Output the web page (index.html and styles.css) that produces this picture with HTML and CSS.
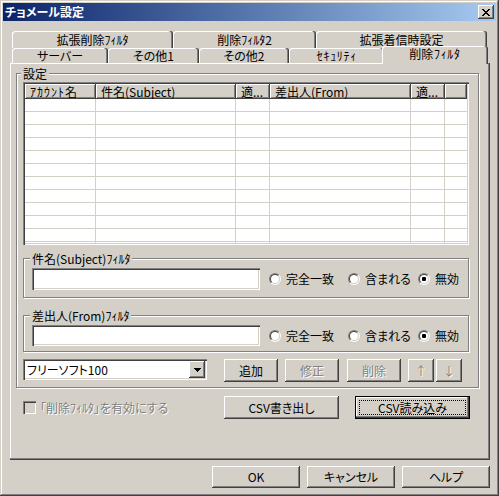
FILE: index.html
```html
<!DOCTYPE html>
<html lang="ja">
<head>
<meta charset="utf-8">
<title>チョメール設定</title>
<link rel="stylesheet" href="styles.css">
</head>
<body>
<div class="window">
  <div class="titlebar">
    <span class="title">チョメール設定</span>
    <span class="close-btn">
      <svg width="8" height="7" viewBox="0 0 8 7" shape-rendering="crispEdges"><path fill="#000" d="M0 0h2v1H0zM6 0h2v1H6zM1 1h2v1H1zM5 1h2v1H5zM2 2h4v1H2zM3 3h2v1H3zM2 4h4v1H2zM1 5h2v1H1zM5 5h2v1H5zM0 6h2v1H0zM6 6h2v1H6z"/></svg>
    </span>
  </div>
  <div class="client">
    <div class="tabstrip">
      <div class="tab-row tab-row-back">
        <div class="tab tab-w161">拡張削除ﾌｨﾙﾀ</div>
        <div class="tab tab-w143">削除ﾌｨﾙﾀ2</div>
        <div class="tab tab-w171">拡張着信時設定</div>
      </div>
      <div class="tab-row tab-row-front">
        <div class="tab tab-w96">サーバー</div>
        <div class="tab tab-w91">その他1</div>
        <div class="tab tab-w90">その他2</div>
        <div class="tab tab-w95"><span class="ls-half">ｾｷｭﾘﾃｨ</span></div>
        <div class="tab tab-selected">削除<span class="ls-half">ﾌｨﾙﾀ</span></div>
      </div>
    </div>
    <div class="panel">
      <div class="group main-group">
        <div class="group-title">設定</div>
        <div class="listview">
          <div class="lv-cols lv-header">
            <div class="lv-head"><span class="ls-1">ｱｶｳﾝﾄ</span>名</div>
            <div class="lv-head">件名(Subject)</div>
            <div class="lv-head">適...</div>
            <div class="lv-head">差出人(From)</div>
            <div class="lv-head">適...</div>
            <div class="lv-head"></div>
          </div>
          <div class="lv-body">
            <div class="lv-cols lv-row"><span></span><span></span><span></span><span></span><span></span><span></span></div>
            <div class="lv-cols lv-row"><span></span><span></span><span></span><span></span><span></span><span></span></div>
            <div class="lv-cols lv-row"><span></span><span></span><span></span><span></span><span></span><span></span></div>
            <div class="lv-cols lv-row"><span></span><span></span><span></span><span></span><span></span><span></span></div>
            <div class="lv-cols lv-row"><span></span><span></span><span></span><span></span><span></span><span></span></div>
            <div class="lv-cols lv-row"><span></span><span></span><span></span><span></span><span></span><span></span></div>
            <div class="lv-cols lv-row"><span></span><span></span><span></span><span></span><span></span><span></span></div>
            <div class="lv-cols lv-row"><span></span><span></span><span></span><span></span><span></span><span></span></div>
            <div class="lv-cols lv-row"><span></span><span></span><span></span><span></span><span></span><span></span></div>
            <div class="lv-cols lv-row"><span></span><span></span><span></span><span></span><span></span><span></span></div>
            <div class="lv-cols lv-row"><span></span><span></span><span></span><span></span><span></span><span></span></div>
            <div class="lv-cols lv-row"><span></span><span></span><span></span><span></span><span></span><span></span></div>
          </div>
        </div>

        <div class="group filter-group filter-group-1">
          <div class="group-title">件名(Subject)ﾌｨﾙﾀ</div>
          <div class="filter-row">
            <div class="textbox"></div>
            <div class="radios">
              <div class="radio radio-w79"><span class="radio-box"><span class="radio-inner"></span></span>完全一致</div>
              <div class="radio radio-w70"><span class="radio-box"><span class="radio-inner"></span></span>含まれる</div>
              <div class="radio"><span class="radio-box"><span class="radio-inner"><span class="radio-dot"></span></span></span>無効</div>
            </div>
          </div>
        </div>

        <div class="group filter-group filter-group-2">
          <div class="group-title">差出人(From)ﾌｨﾙﾀ</div>
          <div class="filter-row">
            <div class="textbox"></div>
            <div class="radios">
              <div class="radio radio-w79"><span class="radio-box"><span class="radio-inner"></span></span>完全一致</div>
              <div class="radio radio-w70"><span class="radio-box"><span class="radio-inner"></span></span>含まれる</div>
              <div class="radio"><span class="radio-box"><span class="radio-inner"><span class="radio-dot"></span></span></span>無効</div>
            </div>
          </div>
        </div>

        <div class="action-row">
          <div class="combo">
            <span class="combo-text">フリーソフト100</span>
            <span class="combo-btn"><svg width="7" height="4" viewBox="0 0 7 4" shape-rendering="crispEdges"><path fill="#000" d="M0 0h7v1H0zM1 1h5v1H1zM2 2h3v1H2zM3 3h1v1H3z"/></svg></span>
          </div>
          <button class="btn btn-small btn-add">追加</button>
          <button class="btn btn-small btn-edit" disabled>修正</button>
          <button class="btn btn-small btn-del" disabled>削除</button>
          <button class="btn btn-arrow btn-up" disabled>↑</button>
          <button class="btn btn-arrow btn-down" disabled>↓</button>
        </div>
      </div>

      <div class="option-row">
        <div class="check-wrap">
          <span class="checkbox"></span>
          <span class="disabled-text">「削除ﾌｨﾙﾀ」を有効にする</span>
        </div>
        <button class="btn btn-csv">CSV書き出し</button>
        <button class="btn btn-csv btn-default"><span class="focus-rect">CSV読み込み</span></button>
      </div>
    </div>

    <div class="dialog-buttons">
      <button class="btn btn-dlg">OK</button>
      <button class="btn btn-dlg">キャンセル</button>
      <button class="btn btn-dlg">ヘルプ</button>
    </div>
  </div>
</div>
</body>
</html>
```

FILE: styles.css
```css
* { box-sizing: border-box; }
html, body { margin: 0; padding: 0; }
body {
  width: 499px;
  height: 496px;
  overflow: hidden;
  background: #D4D0C8;
  font-family: "Noto Sans CJK JP", "Noto Sans", "Liberation Sans", sans-serif;
  font-size: 12px;
  line-height: 12px;
  font-feature-settings: "palt";
  color: #000;
}

/* spacing helpers for half-width kana (UI font is wider than Noto's half-width forms) */
.ls-half { letter-spacing: 0.7px; padding-left: 0.7px; }
.ls-1 { letter-spacing: 1px; }

/* window frame */
.window {
  width: 499px;
  height: 496px;
  padding: 3px;
  background: #D4D0C8;
  box-shadow: inset -1px -1px #404040, inset 1px 1px #D4D0C8, inset -2px -2px #808080, inset 2px 2px #fff;
  display: flex;
  flex-direction: column;
}
.titlebar {
  flex: none;
  height: 18px;
  display: flex;
  align-items: center;
  justify-content: space-between;
  padding: 0 2px;
  background: linear-gradient(to right, #0A246A, #A6CAF0);
}
.title {
  color: #fff;
  font-weight: bold;
  white-space: nowrap;
}
.close-btn {
  width: 16px;
  height: 14px;
  display: flex;
  align-items: center;
  justify-content: center;
  background: #D4D0C8;
  box-shadow: inset -1px -1px #404040, inset 1px 1px #fff, inset -2px -2px #808080;
}
.close-btn svg { display: block; margin-top: 1px; }

.client {
  flex: 1;
  display: flex;
  flex-direction: column;
  padding: 10px 6px 0 7px;
}

/* tabs */
.tabstrip { padding-left: 2px; }
.tab-row { display: flex; }
.tab-row-back { height: 17px; }
.tab-row-front { height: 15px; align-items: flex-end; }
.tab {
  flex: none;
  height: 100%;
  display: flex;
  align-items: center;
  justify-content: center;
  white-space: nowrap;
  background: #D4D0C8;
  border-radius: 3px 3px 0 0;
  box-shadow: inset -1px 0 #404040, inset -2px 0 #808080, inset 1px 1px #fff;
}
.tab-w161 { width: 161px; }
.tab-w143 { width: 143px; }
.tab-w171 { width: 171px; }
.tab-w96 { width: 96px; }
.tab-w91 { width: 91px; }
.tab-w90 { width: 90px; }
.tab-w95 { width: 95px; }
.tab-selected {
  width: 106px;
  height: 18px;
  margin: 0 0 -1px -2px;
  padding-bottom: 2px;
  position: relative;
  z-index: 1;
}

/* tab page */
.panel {
  flex: none;
  width: 480px;
  height: 397px;
  padding: 10px 0 0 6px;
  box-shadow: inset -1px -1px #404040, inset -2px -2px #808080, inset 1px 1px #fff;
}

.group {
  border: 1px solid #808080;
  box-shadow: inset 1px 1px #fff, 1px 1px #fff;
}
.group-title {
  width: fit-content;
  height: 12px;
  margin: -6px 0 0 -2px;
  padding: 0 2px;
  background: #D4D0C8;
  white-space: nowrap;
}
.main-group {
  width: 463px;
  padding: 0 9px 5px 6px;
}
.main-group > .group-title { margin-bottom: 2px; }

/* list view */
.listview {
  height: 163px;
  padding: 2px;
  background: #fff;
  box-shadow: inset 1px 1px #808080, inset 2px 2px #404040, inset -1px -1px #fff, inset -2px -2px #D4D0C8;
}
.lv-cols {
  display: grid;
  grid-template-columns: 71px 140px 34px 141px 34px 1fr;
}
.lv-header { height: 15px; }
.lv-head {
  display: flex;
  align-items: center;
  padding-left: 5px;
  overflow: hidden;
  white-space: nowrap;
  background: #D4D0C8;
  box-shadow: inset -1px -1px #404040, inset 1px 1px #fff, inset -2px -2px #808080;
}
.lv-body { height: 144px; overflow: hidden; }
.lv-row {
  height: 13px;
  border-bottom: 1px solid #D4D0C8;
}
.lv-row > span { border-right: 1px solid #D4D0C8; }
.lv-row > span:last-child { border-right: none; }

/* filter groups */
.filter-group { padding: 0 0 7px 8px; }
.filter-group > .group-title { margin-bottom: 3px; }
.filter-group-1 { margin-top: 13px; }
.filter-group-2 { margin-top: 17px; padding-bottom: 5px; }
.filter-row { display: flex; align-items: center; }
.textbox {
  width: 228px;
  height: 22px;
  background: #fff;
  box-shadow: inset 1px 1px #808080, inset 2px 2px #404040, inset -1px -1px #fff, inset -2px -2px #D4D0C8;
}
.filter-group-2 .textbox { height: 21px; }
.radios { display: flex; margin-left: 9px; }
.radio {
  display: flex;
  align-items: center;
  gap: 5px;
  white-space: nowrap;
}
.radio-w79 { width: 79px; }
.radio-w70 { width: 70px; }
.radio-box {
  width: 12px;
  height: 12px;
  border-radius: 50%;
  border: 1px solid;
  border-color: #808080 #fff #fff #808080;
  display: flex;
}
.radio-inner {
  width: 10px;
  height: 10px;
  border-radius: 50%;
  border: 1px solid;
  border-color: #404040 #D4D0C8 #D4D0C8 #404040;
  background: #fff;
  display: flex;
  align-items: center;
  justify-content: center;
}
.radio-dot {
  width: 4px;
  height: 4px;
  border-radius: 1px;
  background: #000;
}

/* combo + buttons */
.action-row { display: flex; margin-top: 7px; }
.combo {
  width: 184px;
  height: 21px;
  padding: 2px;
  margin-right: 17px;
  display: flex;
  background: #fff;
  box-shadow: inset 1px 1px #808080, inset 2px 2px #404040, inset -1px -1px #fff, inset -2px -2px #D4D0C8;
}
.combo-text {
  flex: 1;
  display: flex;
  align-items: center;
  padding-left: 2px;
  white-space: nowrap;
}
.combo-btn {
  width: 16px;
  display: flex;
  align-items: center;
  justify-content: center;
  background: #D4D0C8;
  box-shadow: inset -1px -1px #404040, inset 1px 1px #fff, inset -2px -2px #808080;
}
.combo-btn svg { display: block; }

.btn {
  font: inherit;
  line-height: 12px;
  font-feature-settings: "palt";
  color: #000;
  border: none;
  margin: 0;
  padding: 0;
  display: flex;
  align-items: center;
  justify-content: center;
  white-space: nowrap;
  background: #D4D0C8;
  box-shadow: inset -1px -1px #404040, inset 1px 1px #fff, inset -2px -2px #808080;
}
.btn:disabled {
  color: #808080;
  text-shadow: 1px 1px 0 #fff;
}
.btn-small { width: 54px; height: 23px; }
.btn-arrow { width: 26px; height: 23px; }
.btn-edit { margin-left: 7px; }
.btn-del { margin-left: 8px; }
.btn-up { margin-left: 7px; }
.btn-down { margin-left: 2px; }

/* bottom of tab page */
.option-row {
  display: flex;
  align-items: center;
  margin: 8px 0 0 7px;
}
.check-wrap {
  width: 201px;
  display: flex;
  align-items: center;
  gap: 4px;
}
.checkbox {
  width: 13px;
  height: 13px;
  background: #D4D0C8;
  box-shadow: inset 1px 1px #808080, inset 2px 2px #404040, inset -1px -1px #fff, inset -2px -2px #D4D0C8;
}
.disabled-text {
  color: #808080;
  text-shadow: 1px 1px 0 #fff;
  white-space: nowrap;
}
.btn-csv { width: 115px; height: 23px; }
.btn-csv + .btn-csv { margin-left: 16px; }
.btn-default {
  padding: 4px;
  align-items: stretch;
  box-shadow: inset 0 0 0 1px #000, inset -2px -2px #404040, inset -3px -3px #808080, inset 2px 2px #fff;
}
.focus-rect {
  flex: 1;
  display: flex;
  align-items: center;
  justify-content: center;
  border: 1px dotted #000;
}

/* dialog buttons */
.dialog-buttons {
  display: flex;
  justify-content: flex-end;
  gap: 7px;
  margin-top: 6px;
}
.btn-dlg { width: 88px; height: 22px; }
```
